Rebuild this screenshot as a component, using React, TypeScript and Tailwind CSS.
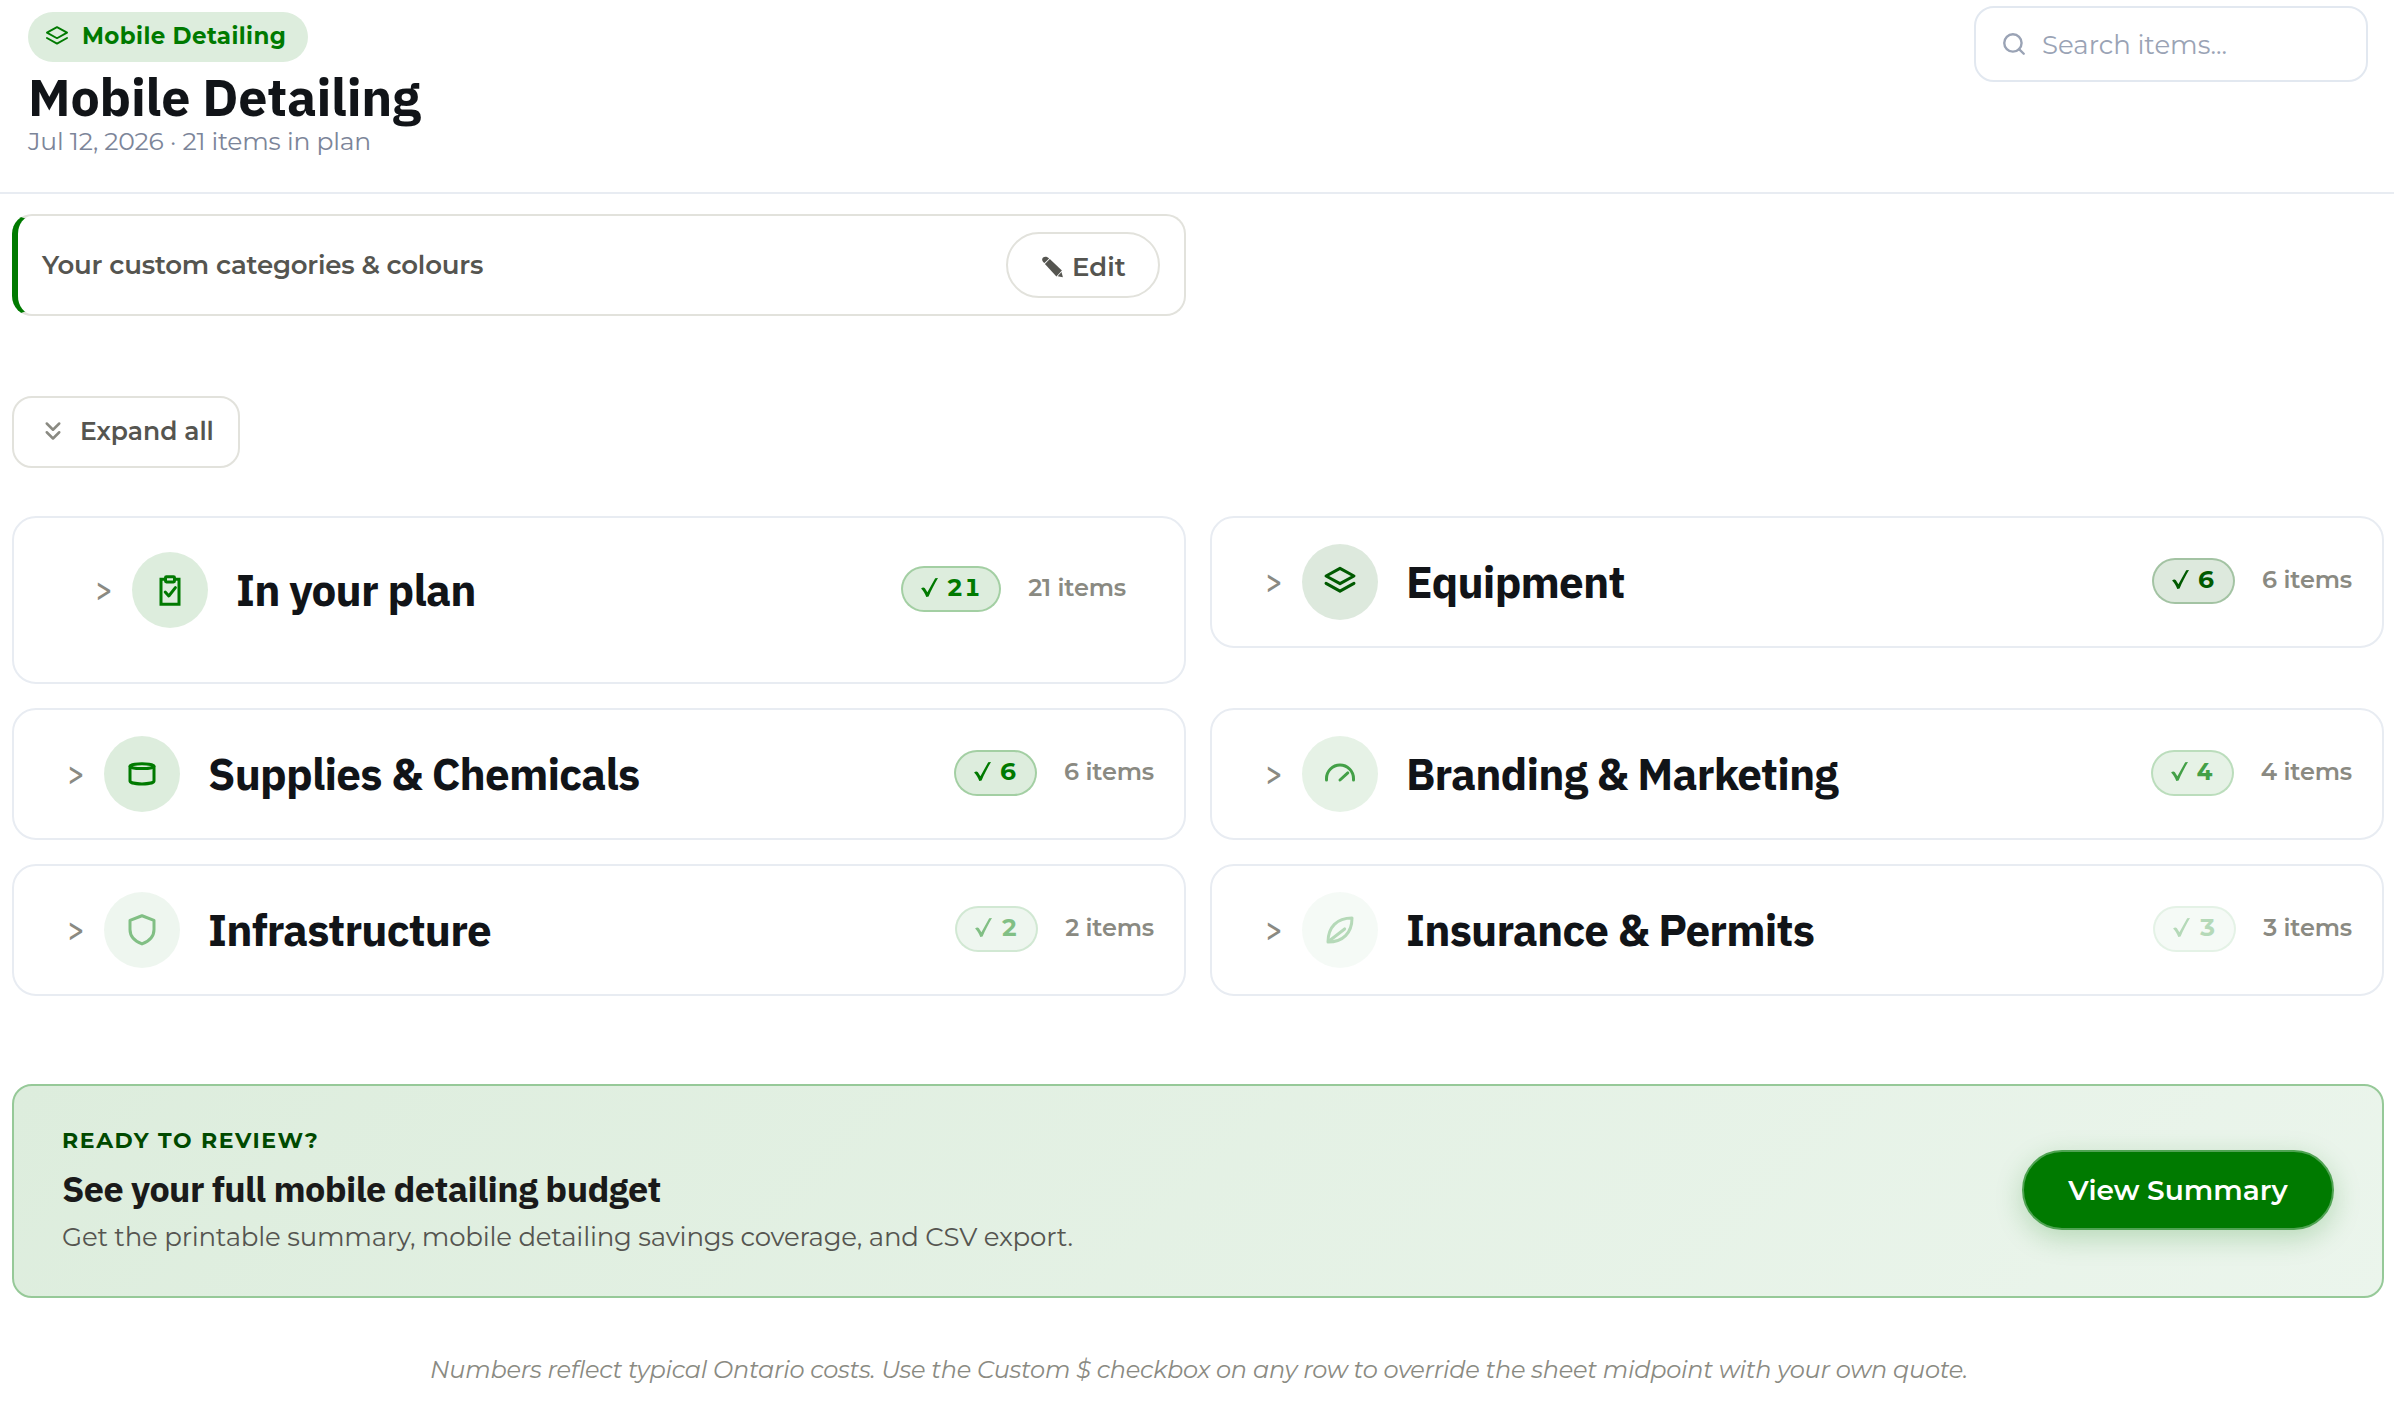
import { ChevronsDown, Search } from "lucide-react"
import clsx from "clsx"
import { ReactNode } from "react"

interface IconProps {
    className?: string
    strokeWidth?: number
}

const Icon = ({ className, strokeWidth = 2, children }: IconProps & { children: ReactNode }) => (
    <svg
        viewBox="0 0 24 24"
        fill="none"
        stroke="currentColor"
        strokeWidth={strokeWidth}
        strokeLinecap="round"
        strokeLinejoin="round"
        className={clsx("shrink-0", className ?? "size-9")}
    >
        {children}
    </svg>
)

const LayersIcon = (props: IconProps) => (
    <Icon {...props}>
        <path d="M12 2.9 21.3 8 12 13.1 2.7 8Z" />
        <path d="M2.7 12.9 12 18.1 21.3 12.9" />
    </Icon>
)

const ClipboardIcon = () => (
    <Icon>
        <path d="M9 4.8H6v16.7h12V4.8h-3" strokeLinejoin="miter" />
        <rect x="9" y="3.2" width="6" height="3.4" rx="0.6" />
        <path d="M8.8 13.4 11.2 16l4.4-5.6" />
    </Icon>
)

const DrumIcon = () => (
    <Icon>
        <ellipse cx="12" cy="6.8" rx="8" ry="1.6" />
        <path d="M4 6.8v9.8c0 1.2 3.6 2 8 2s8-.8 8-2V6.8" />
    </Icon>
)

const GaugeIcon = () => (
    <Icon>
        <path d="M3 16v-1a9 9 0 0 1 18 0v1" />
        <path d="m12 16 5.2-4.7" />
    </Icon>
)

const ShieldIcon = () => (
    <Icon>
        <path d="M12 2.5 20 5.6v6c0 4.8-3.4 7.9-8 9.7-4.6-1.8-8-4.9-8-9.7v-6Z" />
    </Icon>
)

const LeafIcon = () => (
    <Icon>
        <path d="M4 20C4 10 10 4 20 4c0 10-6 16-16 16Z" />
        <path d="m4.5 19.5 10.6-8.2" />
    </Icon>
)

const PencilIcon = () => (
    <svg viewBox="0 0 22 22" fill="currentColor" className="size-[22px] shrink-0">
        <path d="M3 6.8C.6 4.8.8 2.6 2.1 1.5 3.8.2 6.4.6 8.1 2.4L3.5 7.1Z" />
        <path d="M8.8 2.900 20.900 14.600 15.400 20.500 3.900 8Z" />
        <path d="M20.500 16 21.900 21.300 16.700 20.300Z" />
    </svg>
)

const CheckIcon = () => (
    <svg viewBox="0 0 17 19" fill="currentColor" className="mr-[9px] h-[19px] w-[17px] shrink-0">
        <path d="M.1 10.600C1.500 9.100 3 9 3.900 10.300L6.400 14.200 14.200.3 17 0C13.500 6 10.200 12.300 7.600 18.500L5.300 19C4 15.700 2.200 12.700.1 10.600Z" />
    </svg>
)

interface Category {
    title: string
    count: number
    icon: ReactNode
    circle: string
    pill: string
    featured?: boolean
}

const categories: Category[] = [
    {
        title: "In your plan",
        count: 21,
        icon: <ClipboardIcon />,
        circle: "text-[#007a00] bg-[#007a0022]",
        pill: "text-[#007a00] bg-[#007a0022] border-[#007a0044]",
        featured: true,
    },
    {
        title: "Equipment",
        count: 6,
        icon: <LayersIcon />,
        circle: "text-[#005a00] bg-[#005a0022]",
        pill: "text-[#005a00] bg-[#005a0022] border-[#005a0044]",
    },
    {
        title: "Supplies & Chemicals",
        count: 6,
        icon: <DrumIcon />,
        circle: "text-[#007a00] bg-[#007a0022]",
        pill: "text-[#007a00] bg-[#007a0022] border-[#007a0044]",
    },
    {
        title: "Branding & Marketing",
        count: 4,
        icon: <GaugeIcon />,
        circle: "text-[#43a047] bg-[#43a04722]",
        pill: "text-[#43a047] bg-[#43a04722] border-[#43a04744]",
    },
    {
        title: "Infrastructure",
        count: 2,
        icon: <ShieldIcon />,
        circle: "text-[#81bf84] bg-[#81bf8422]",
        pill: "text-[#81bf84] bg-[#81bf8422] border-[#81bf8444]",
    },
    {
        title: "Insurance & Permits",
        count: 3,
        icon: <LeafIcon />,
        circle: "text-[#b5d9b8] bg-[#b5d9b822]",
        pill: "text-[#b5d9b8] bg-[#b5d9b822] border-[#b5d9b844]",
    },
]

const CategoryCard = ({ title, count, icon, circle, pill, featured }: Category) => (
    <section
        className={clsx(
            "flex items-start rounded-3xl border-2 border-[#e8ecf2] bg-white",
            featured ? "h-[168px] pt-[34px] pr-[58px] pl-[81px]" : "h-[132px] pt-[26px] pr-[30px] pl-[53px]",
        )}
    >
        <div className="flex h-[76px] w-full items-center">
            <span className="mb-[3px] w-[37px] font-['IBM_Plex_Sans',Inter,sans-serif] text-[30px] leading-9 font-medium text-[#8a8a82]">
                &gt;
            </span>
            <div className={clsx("flex size-[76px] shrink-0 items-center justify-center rounded-full", circle)}>
                {icon}
            </div>
            <h2 className="ml-7 flex-1 font-['IBM_Plex_Sans','Open_Sans',sans-serif] text-[44px] leading-[52px] font-bold tracking-[-0.8px] text-[#111418]">
                {title}
            </h2>
            <span
                className={clsx(
                    "mb-0.5 flex h-[46px] items-center rounded-full border-2 px-[18px] pb-[3px] text-2xl font-bold tracking-[0.5px] tabular-nums",
                    pill,
                )}
            >
                <CheckIcon />
                {count}
            </span>
            <span className="mb-1 ml-[27px] text-2xl font-semibold tracking-[-0.15px] text-[#8a8a82]">
                {count} items
            </span>
        </div>
    </section>
)

const App = () => {
    return (
        <div className="min-h-[1412px] bg-white font-['Montserrat','IBM_Plex_Sans',Inter,sans-serif]">
            <header className="flex h-[194px] items-start justify-between border-b-2 border-[#e8ecf2] pt-1.5 pr-[26px] pl-7">
                <div className="pt-1.5">
                    <div className="flex h-[50px] w-[280px] items-center gap-3 rounded-full bg-[#ddeddd] pb-0.5 pl-4 text-[#007a00]">
                        <LayersIcon className="mt-0.5 size-[26px]" strokeWidth={1.7} />
                        <span className="text-[23px] font-bold tracking-[0.4px]">Mobile Detailing</span>
                    </div>
                    <h1 className="mt-1.5 font-['IBM_Plex_Sans','Open_Sans',sans-serif] text-[52px] leading-[57px] font-bold tracking-[-0.2px] text-[#111418]">
                        Mobile Detailing
                    </h1>
                    <p className="text-[25px] leading-8 tracking-[-0.2px] text-[#7c8599]">
                        Jul 12, 2026 · 21 items in plan
                    </p>
                </div>
                <div className="flex h-[76px] w-[394px] items-center gap-[15px] rounded-[20px] border-2 border-[#e2e8f0] pl-[25px] text-[#9aa3b5]">
                    <Search className="size-[26px]" strokeWidth={2.2} />
                    <span className="pt-0.5 text-[26px]">Search items...</span>
                </div>
            </header>

            <main className="pr-2.5 pl-3">
                <div className="mt-5 flex h-[102px] w-[1174px] items-center justify-between rounded-[20px] border-2 border-l-[6px] border-[#e2e2dc] border-l-[#007a00] px-6">
                    <span className="text-[26px] font-semibold tracking-[-0.19px] text-[#555550]">
                        Your custom categories &amp; colours
                    </span>
                    <button className="flex h-[66px] w-[154px] items-center gap-[9px] rounded-full border-2 border-[#e2e2dc] pt-1 pl-[33px] text-[26px] font-semibold text-[#555550]">
                        <PencilIcon />
                        Edit
                    </button>
                </div>

                <button className="mt-20 flex h-[72px] w-[228px] items-center gap-3 rounded-[20px] border-2 border-[#e2e2dc] pl-6 text-[25px] font-semibold text-[#555550]">
                    <ChevronsDown className="mb-0.5 size-[30px] text-[#8a8a82]" />
                    Expand all
                </button>

                <div className="mt-12 grid grid-cols-2 items-start gap-6">
                    {categories.map((category) => (
                        <CategoryCard key={category.title} {...category} />
                    ))}
                </div>

                <section className="mt-[88px] flex h-[214px] items-center justify-between rounded-[20px] border-2 border-[#96c998] bg-linear-135 from-[#ddeddd] to-[#ebf5ec] px-12">
                    <div>
                        <p className="text-[22px] leading-7 font-bold tracking-[1.6px] text-[#004a00]">READY TO REVIEW?</p>
                        <h3 className="mt-3 font-['IBM_Plex_Sans','Open_Sans',sans-serif] text-4xl leading-[44px] font-bold tracking-[-0.59px] text-[#1a1a1a]">
                            See your full mobile detailing budget
                        </h3>
                        <p className="mt-2 text-[26px] leading-9 tracking-[-0.2px] text-[#555550]">
                            Get the printable summary, mobile detailing savings coverage, and CSV export.
                        </p>
                    </div>
                    <button className="mb-0.5 h-20 w-[312px] rounded-full border-2 border-[#4fa352] bg-[#007a00] text-[28px] font-semibold text-white shadow-[0_8px_28px_rgba(0,122,0,0.22)]">
                        View Summary
                    </button>
                </section>

                <p className="mt-14 pl-0.5 text-center text-2xl leading-8 tracking-[-0.25px] text-[#8a8a82] italic">
                    Numbers reflect typical Ontario costs. Use the Custom $ checkbox on any row to override the sheet
                    midpoint with your own quote.
                </p>
            </main>
        </div>
    )
}

export default App
